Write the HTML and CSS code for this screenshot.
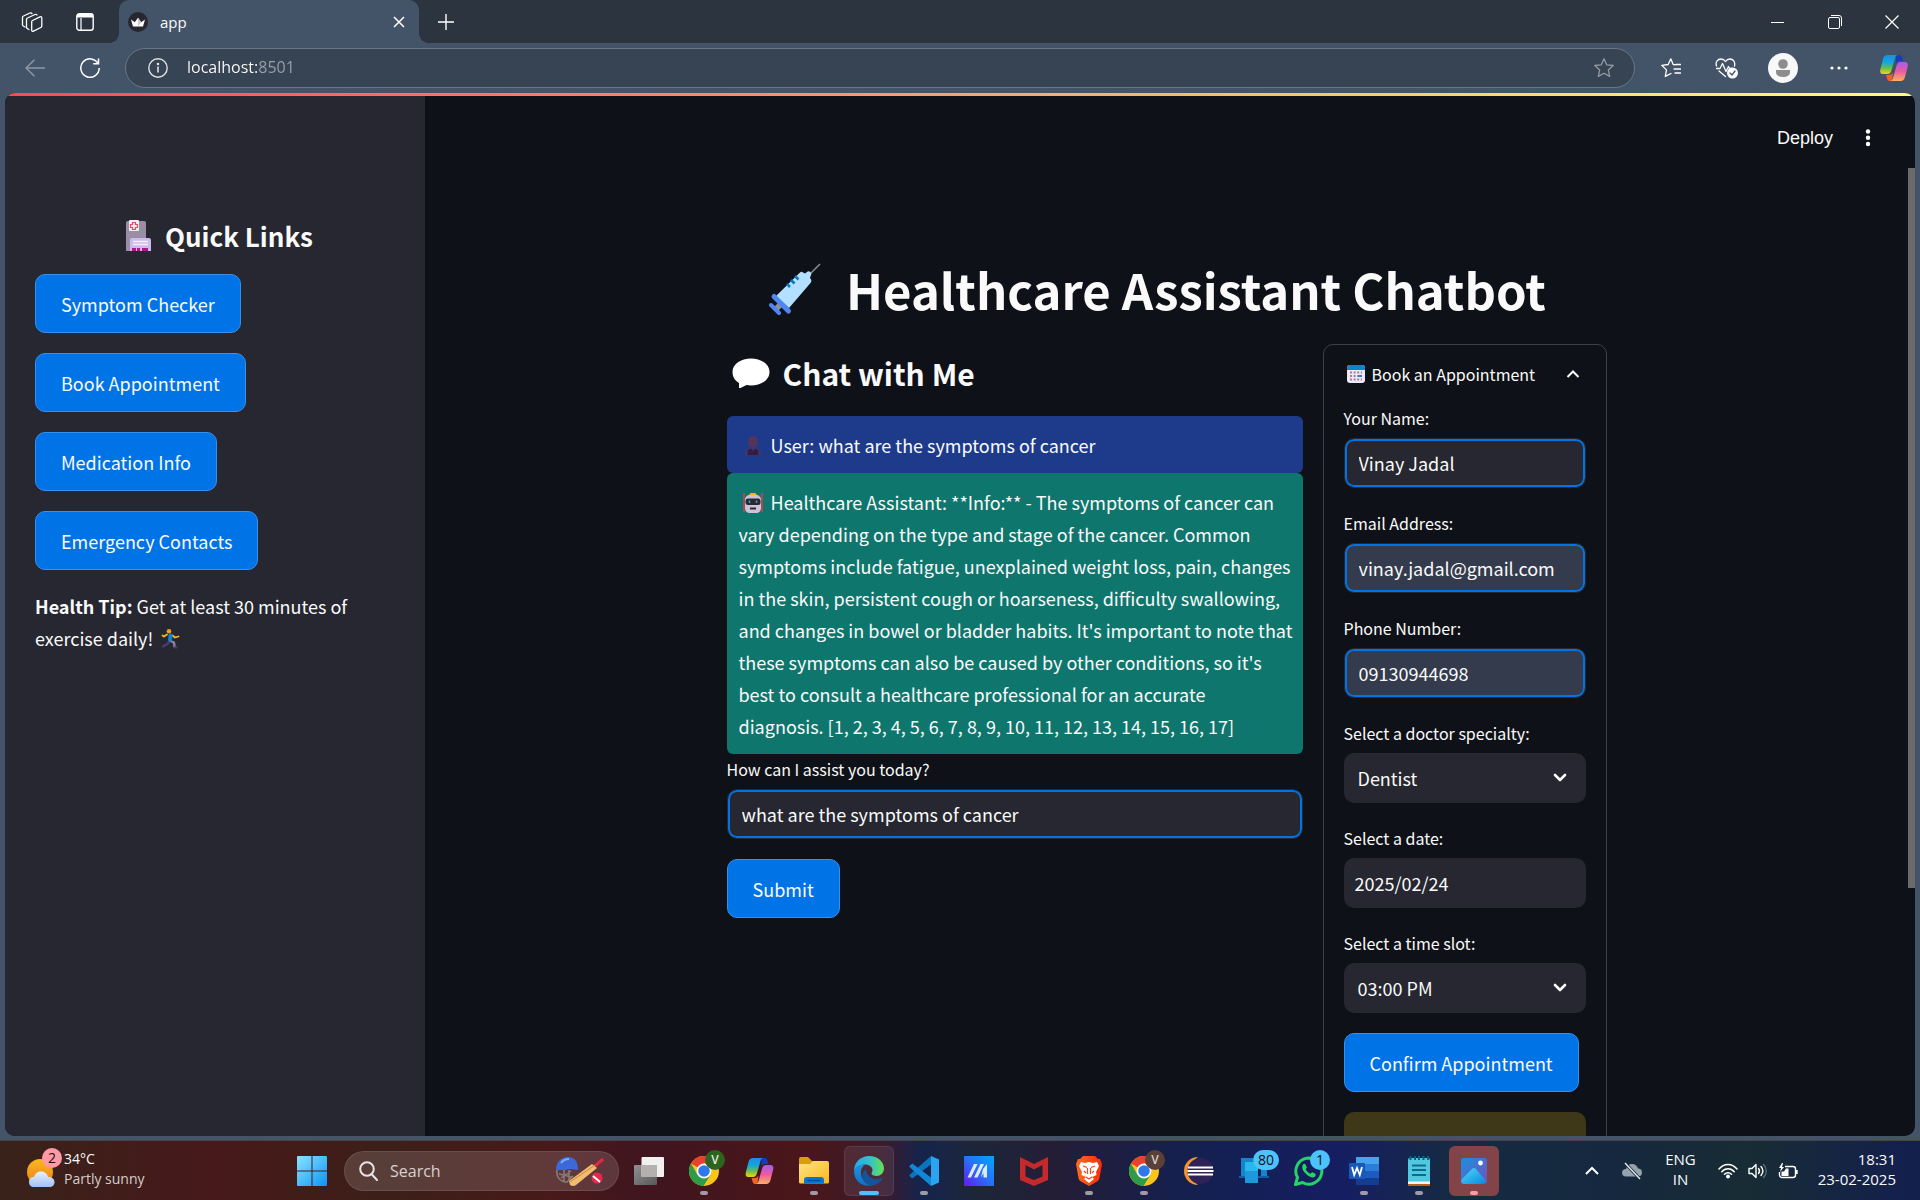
FILE: index.html
```html
<!DOCTYPE html>
<html lang="en">
<head>
<meta charset="utf-8">
<meta name="viewport" content="width=device-width, initial-scale=1">
<title>app</title>
<link rel="stylesheet" href="styles.css">
</head>
<body>
<svg class="defs" aria-hidden="true">
  <defs>
    <linearGradient id="cpA" x1="0" y1="0" x2="0" y2="1"><stop offset="0" stop-color="#1a8cf0"/><stop offset=".4" stop-color="#12a8d8"/><stop offset=".7" stop-color="#6cc04a"/><stop offset="1" stop-color="#f5d60a"/></linearGradient>
    <linearGradient id="cpB" x1="0" y1="0" x2="0" y2="1"><stop offset="0" stop-color="#a45cf0"/><stop offset=".5" stop-color="#ee5a9c"/><stop offset="1" stop-color="#fcb060"/></linearGradient>
    <linearGradient id="winG" x1="0" y1="0" x2="1" y2="1"><stop offset="0" stop-color="#8be4ff"/><stop offset="1" stop-color="#0a94f8"/></linearGradient>
    <linearGradient id="sunG" x1="0" y1="0" x2="0" y2="1"><stop offset="0" stop-color="#f8b820"/><stop offset="1" stop-color="#f08018"/></linearGradient>
    <linearGradient id="cloudG" x1="0" y1="0" x2="0" y2="1"><stop offset="0" stop-color="#e8f0fc"/><stop offset="1" stop-color="#a0c0f4"/></linearGradient>
    <linearGradient id="foldG" x1="0" y1="0" x2="1" y2="1"><stop offset="0" stop-color="#ffe484"/><stop offset="1" stop-color="#f8b820"/></linearGradient>
    <linearGradient id="edgeA" x1="0" y1="0" x2="1" y2="0"><stop offset="0" stop-color="#28a8e8"/><stop offset=".5" stop-color="#30c0d0"/><stop offset="1" stop-color="#68e050"/></linearGradient>
    <linearGradient id="edgeB" x1="0" y1="0" x2="0" y2="1"><stop offset="0" stop-color="#1c94e0"/><stop offset="1" stop-color="#1070c8"/></linearGradient>
    <linearGradient id="maG" x1="0" y1="1" x2="1" y2="0"><stop offset="0" stop-color="#6418f0"/><stop offset=".5" stop-color="#2870f8"/><stop offset="1" stop-color="#00a8ff"/></linearGradient>
    <linearGradient id="phG" x1="0" y1="0" x2="1" y2="1"><stop offset="0" stop-color="#1890e0"/><stop offset="1" stop-color="#7850b8"/></linearGradient>
    <linearGradient id="mtG" x1="0" y1="0" x2="1" y2="1"><stop offset="0" stop-color="#50d8f8"/><stop offset="1" stop-color="#0888e0"/></linearGradient>
    <linearGradient id="braveG" x1="0" y1="0" x2="1" y2="0"><stop offset="0" stop-color="#ff6a20"/><stop offset="1" stop-color="#fb2c08"/></linearGradient>
    <linearGradient id="grayG" x1="0" y1="0" x2="1" y2="1"><stop offset="0" stop-color="#909090"/><stop offset="1" stop-color="#585858"/></linearGradient>
    <symbol id="copilot" viewBox="0 0 28 28">
      <path d="M16 1h3c2 0 2.600 1 3.200 3l.8 3h-3c-2 0-3.500 1-4 3z" fill="#1838c8"/>
      <path d="M12 27H9.500c-1.500 0-2-1-2.500-2.500L6 21h3c2 0 3.500-1 4-3z" fill="#f06028"/>
      <path d="M7.500 1H18c-1.500 0-2.500 1-3 3l-3.600 12.500C10.600 19 9.500 20 7.500 20H3C.5 20-.3 18 .3 15.500L3 5C3.800 2.200 5 1 7.500 1z" fill="url(#cpA)"/>
      <path d="M20.500 27H10c1.500 0 2.500-1 3-3l3.600-12.500c.8-2.500 1.900-3.500 3.900-3.500H25c2.500 0 3.300 2 2.700 4.500L25 23c-.8 2.800-2 4-4.500 4z" fill="url(#cpB)"/>
    </symbol>
    <symbol id="chrome" viewBox="0 0 30 30">
      <circle cx="15" cy="15" r="15" fill="#fbc418"/>
      <path d="M15 15L2 7.500A15 15 0 0 1 28 7.500H15z" fill="#ea4030"/>
      <path d="M2 7.500A15 15 0 0 0 14.500 30L21.500 18.700 15 15 8.500 18.700z" fill="#2c9c48"/>
      <circle cx="15" cy="15" r="7.400" fill="#fff"/><circle cx="15" cy="15" r="5.800" fill="#2f78ec"/>
    </symbol>
  </defs>
</svg>

<div class="window">
  <header class="tabstrip">
    <button class="icon-btn" aria-label="Workspaces"><svg width="22" height="22" viewBox="0 0 22 22" fill="none" stroke="#fff" stroke-width="1.300" stroke-linejoin="round" stroke-linecap="round"><path d="M4 16l-1.500-.8A1.600 1.600 0 0 1 1.500 14V6.500c0-.8.3-1.200 1-1.500L9 2c.8-.3 1.500-.2 2 .5"/><path d="M8 18.500l-1.500-.8a1.600 1.600 0 0 1-1-1.500V8.500c0-.8.3-1.200 1-1.500L14 3.500c.8-.3 1.600-.2 2 .5"/><path d="M11.500 9.500l7.500-3.700c1-.4 1.800 0 1.800 1V15c0 .7-.3 1.200-1 1.500L12.500 20.200c-1 .5-1.800 0-1.800-1V11c0-.7.200-1.200.8-1.500z"/></svg></button>
    <button class="icon-btn" aria-label="Tab actions"><svg width="18" height="18" viewBox="0 0 18 18"><rect x=".8" y=".8" width="16.400" height="16.400" rx="2.500" fill="none" stroke="#fff" stroke-width="1.400"/><path d="M1 4.500V3a2 2 0 0 1 2-2h12a2 2 0 0 1 2 2v1.500z" fill="#fff"/><path d="M5 5v12" stroke="#fff" stroke-width="1.200"/></svg></button>
    <div class="tab">
      <svg width="20" height="20" viewBox="0 0 20 20"><circle cx="10" cy="10" r="10" fill="#262730"/><path d="M3 7.500l3.800 2.800L10 5.800l3.200 4.500L17 7.500l-2 7H5z" fill="#fff"/><path d="M10 5.800l3.200 4.500L10 14.500z" fill="#ccc"/></svg>
      <span class="tab-title">app</span>
      <button class="tab-close" aria-label="Close tab"><svg width="12" height="12" viewBox="0 0 12 12" stroke="#fff" stroke-width="1.500"><path d="M1 1l10 10M11 1L1 11"/></svg></button>
    </div>
    <button class="icon-btn new-tab" aria-label="New tab"><svg width="18" height="18" viewBox="0 0 18 18" stroke="#fff" stroke-width="1.400"><path d="M9 1v16M1 9h16"/></svg></button>
    <div class="win-controls">
      <button aria-label="Minimize"><svg width="14" height="14" viewBox="0 0 14 14" stroke="#fff"><path d="M0 7.500h13"/></svg></button>
      <button aria-label="Restore"><svg width="14" height="14" viewBox="0 0 14 14" fill="none" stroke="#fff"><rect x=".5" y="2.500" width="11" height="11" rx="1.500"/><path d="M3 .5h8a2.500 2.500 0 0 1 2.500 2.500v8"/></svg></button>
      <button aria-label="Close"><svg width="14" height="14" viewBox="0 0 14 14" stroke="#fff" stroke-width="1.200"><path d="M.5.5l13 13M13.500.5l-13 13"/></svg></button>
    </div>
  </header>

  <nav class="toolbar">
    <button class="icon-btn" aria-label="Back"><svg width="20" height="18" viewBox="0 0 20 18" fill="none" stroke="#8d98a5" stroke-width="1.400"><path d="M20 9H1M9.500.8L1 9l8.500 8.200"/></svg></button>
    <button class="icon-btn" aria-label="Refresh"><svg width="20" height="20" viewBox="0 0 20 20" fill="none" stroke="#fff" stroke-width="1.500"><path d="M18 5.500A9.200 9.200 0 1 0 19.200 10M18.500.5v5.300h-5.300"/></svg></button>
    <div class="address">
      <svg width="20" height="20" viewBox="0 0 20 20" fill="none" stroke="#dde1e5" stroke-width="1.400"><circle cx="10" cy="10" r="9.200"/><path d="M10 8.500v6" stroke-width="1.600"/><circle cx="10" cy="6" r=".6"/></svg>
      <input class="url" aria-label="Address" value="localhost:8501">
      <button class="star" aria-label="Add to favorites"><svg width="20" height="20" viewBox="0 0 20 20" fill="none" stroke="#939aa2" stroke-width="1.300" stroke-linejoin="round"><path d="M10 .8l2.700 6 6.500.7-4.900 4.400 1.400 6.500L10 15.200l-5.700 3.200 1.400-6.500L.8 7.500l6.500-.7z"/></svg></button>
    </div>
    <div class="toolbar-actions">
      <button aria-label="Favorites"><svg width="20" height="20" viewBox="0 0 20 20" fill="none" stroke="#fff" stroke-width="1.300" stroke-linejoin="round" stroke-linecap="round"><path d="M15 6.500h4.500M13 11h6.500M14 15h5.500M14.500 6.800l-2.300-.3L9.800.8 7.200 6.500.8 7.400l4.700 4.500-1.200 6.500L10 15.500"/></svg></button>
      <button aria-label="Browser essentials"><svg width="24" height="21" viewBox="0 0 24 21" fill="none" stroke="#fff" stroke-width="1.300" stroke-linecap="round" stroke-linejoin="round"><path d="M1.500 8C0 3.500 3 1 6 1c2 0 3.500 1 4.500 2.500C11.500 2 13 1 15 1c3 0 5.500 2.500 4.500 7M1.500 10.500H5l2.500-5 3.500 8 2.500-5 1 2h3M4 13l6.500 5.500"/><circle cx="17.500" cy="15" r="5.500" fill="#fff" stroke="none"/><path d="M15 15l2 2 3-4" stroke="#445468"/></svg></button>
      <button aria-label="Profile"><svg width="30" height="30" viewBox="0 0 30 30"><circle cx="15" cy="15" r="15" fill="#f8f8f8"/><circle cx="15" cy="11" r="4.800" fill="#8d8d8d"/><path d="M8 17h14v2c0 3.500-3 5-7 5s-7-1.500-7-5z" fill="#8d8d8d"/></svg></button>
      <button aria-label="Settings and more"><svg width="18" height="4" viewBox="0 0 18 4" fill="#fff"><circle cx="2" cy="2" r="1.600"/><circle cx="9" cy="2" r="1.600"/><circle cx="16" cy="2" r="1.600"/></svg></button>
      <button aria-label="Copilot"><svg width="28" height="28"><use href="#copilot"/></svg></button>
    </div>
  </nav>

  <div class="viewport">
    <div class="rainbow"></div>
    <aside class="sidebar">
      <h2 class="side-title"><svg width="27" height="32" viewBox="0 0 27 32"><path d="M1 3a2 2 0 0 1 2-2h16a2 2 0 0 1 2 2v28H1z" fill="#998ea4"/><rect x="4" y="0" width="10" height="11" rx="1" fill="#f4eef8"/><path d="M7.500 2.500h3v2h2v3h-2v2h-3v-2h-2v-3h2z" fill="none" stroke="#f04858" stroke-width="1.200"/><path d="M5 20a2 2 0 0 1 2-2h17a2 2 0 0 1 2 2v11H5z" fill="#cdbcea"/><path d="M8 21.500h15M8 24.500h15" stroke="#f4eef8" stroke-width="1.500"/><path d="M7 28h4v3H7zM12 28h3v3h-3zM17 28h6v3h-6z" fill="#b01888"/></svg><span>Quick Links</span></h2>
      <button class="btn">Symptom Checker</button>
      <button class="btn">Book Appointment</button>
      <button class="btn">Medication Info</button>
      <button class="btn">Emergency Contacts</button>
      <p class="tip"><strong>Health Tip:</strong> Get at least 30 minutes of exercise daily! <svg class="emoji" width="20" height="20" viewBox="0 0 20 20" fill="none" stroke-linecap="round" stroke-linejoin="round"><path d="M8 12l-1 2.500-5 3" stroke="#503878" stroke-width="2.400"/><path d="M9.500 12l3.500 1.500.5 4" stroke="#8d8098" stroke-width="2.400"/><path d="M6 5.500L3 7.500l-1.500-1M11.500 6.500l2.500 2 3.500-1" stroke="#fcb820" stroke-width="1.800"/><path d="M9.500 6.500L9 10.500" stroke="#0088d0" stroke-width="4"/><circle cx="8" cy="2.300" r="2.300" fill="#f0a020"/><path d="M13.500 18.500h2" stroke="#503878" stroke-width="2"/></svg></p>
    </aside>

    <main class="main">
      <div class="app-header">
        <button class="deploy">Deploy</button>
        <button class="kebab" aria-label="Main menu"><svg width="6" height="18" viewBox="0 0 6 18" fill="#fff"><circle cx="3" cy="2.500" r="2.200"/><circle cx="3" cy="8.800" r="2.200"/><circle cx="3" cy="15" r="2.200"/></svg></button>
      </div>
      <div class="content">
        <h1 class="title"><svg width="52" height="52" viewBox="0 0 52 52"><path d="M40 12L51 1" stroke="#8a8a8e" stroke-width="1.600"/><path d="M4 45l6-6 4 4-6 6z" fill="#909098"/><path d="M2 42l8 8" stroke="#4f86f4" stroke-width="4" stroke-linecap="round"/><path d="M31 9.500c1-1 2-1 3 0l2 1 2-1.500c1-1 2.500-.8 3.500.3s1 2.500.2 3.500L41 15c1.500 1.500 2 3 .5 5L20 45 7 33z" fill="#b3e0ff"/><path d="M5 33.500L19.500 48" stroke="#4f86f4" stroke-width="5" stroke-linecap="round"/><path d="M18 21l3 3M22 17l3.500 3.500M26 13l3.500 3.500" stroke="#0a78c0" stroke-width="2.600"/></svg><span>Healthcare Assistant Chatbot</span></h1>
        <div class="columns">
          <section class="chat">
            <h2 class="chat-title"><svg width="38" height="31" viewBox="0 0 38 31"><path d="M19 .5C29 .5 37.500 6 37.500 14S29 27.500 19 27.500c-1.500 0-3 0-4.500-.4L8.500 30c-1 .3-1.800 0-1.500-1V25C3 22.500.5 19 .5 14 .5 6 9 .5 19 .5z" fill="#fff"/></svg><span>Chat with Me</span></h2>
            <div class="msg user"><svg class="emoji" width="20" height="20" viewBox="-1 0 20 20"><path d="M9 0c3.300 0 5 2 5 5 0 2.500-.5 5-2.500 6.500h-5C4.500 10 4 7.500 4 5c0-3 1.700-5 5-5z" fill="#52345f"/><path d="M1 19c0-4 2-6 5-6.500h6c3 .5 5 2.500 5 6.500z" fill="#52345f"/><path d="M3.500 19v-4.500L7 12.500l2 2.500 2-2.500 3.500 2V19z" fill="#351c40"/></svg> User: what are the symptoms of cancer</div>
            <div class="msg bot"><svg class="emoji" width="20" height="20" viewBox="0 0 20 20"><path d="M1 0v19M19 0v19" stroke="#e83848" stroke-width="1.400"/><rect x="6.500" y="0" width="7" height="4" rx="1.500" fill="#fcb020"/><path d="M2 7c0-3 2-5 5-5h6c3 0 5 2 5 5v8c0 3-2 5-5 5H7c-3 0-5-2-5-5z" fill="#cdc2d6"/><rect x="2.500" y="5.500" width="15" height="6.500" rx="2.500" fill="#2c2830"/><path d="M6.500 7.500v2.500M13.500 7.500v2.500" stroke="#10a8f0" stroke-width="1.600"/><path d="M7 15.500h6" stroke="#2c2830" stroke-width="2"/></svg> Healthcare Assistant: **Info:** - The symptoms of cancer can vary depending on the type and stage of the cancer. Common symptoms include fatigue, unexplained weight loss, pain, changes in the skin, persistent cough or hoarseness, difficulty swallowing, and changes in bowel or bladder habits. It's important to note that these symptoms can also be caused by other conditions, so it's best to consult a healthcare professional for an accurate diagnosis. [1, 2, 3, 4, 5, 6, 7, 8, 9, 10, 11, 12, 13, 14, 15, 16, 17]</div>
            <div class="field">
              <label for="q">How can I assist you today?</label>
              <input class="text" id="q" type="text" value="what are the symptoms of cancer">
            </div>
            <button class="btn">Submit</button>
          </section>

          <details class="expander" open>
            <summary><svg width="18" height="18" viewBox="0 0 18 18"><rect width="18" height="18" rx="3" fill="#f0e8f8"/><path d="M0 5V3a3 3 0 0 1 3-3h12a3 3 0 0 1 3 3v2z" fill="#0a84cc"/><path d="M3 7.500h12M3 11h12M3 14.500h12" stroke="#90889c" stroke-width="1.800" stroke-dasharray="2 1.600"/><path d="M11.500 11h3" stroke="#0a84cc" stroke-width="2"/></svg><span>Book an Appointment</span><svg class="chev" width="14" height="10" viewBox="0 0 14 10" fill="none" stroke="#fafafa" stroke-width="2"><path d="M1.500 8L7 2.500 12.500 8"/></svg></summary>
            <form class="form">
              <div class="field"><label for="n">Your Name:</label><input class="text" id="n" type="text" value="Vinay Jadal"></div>
              <div class="field"><label for="e">Email Address:</label><input class="text autofill" id="e" type="text" value="vinay.jadal@gmail.com"></div>
              <div class="field"><label for="p">Phone Number:</label><input class="text autofill" id="p" type="text" value="09130944698"></div>
              <div class="field"><label for="s">Select a doctor specialty:</label>
                <div class="select"><select id="s"><option>Dentist</option></select><svg width="14" height="10" viewBox="0 0 14 10" fill="none" stroke="#fafafa" stroke-width="2.600" stroke-linecap="round" stroke-linejoin="round"><path d="M2 2l5 5 5-5"/></svg></div></div>
              <div class="field"><label for="d">Select a date:</label><input class="date" id="d" type="text" value="2025/02/24"></div>
              <div class="field"><label for="t">Select a time slot:</label>
                <div class="select"><select id="t"><option>03:00 PM</option></select><svg width="14" height="10" viewBox="0 0 14 10" fill="none" stroke="#fafafa" stroke-width="2.600" stroke-linecap="round" stroke-linejoin="round"><path d="M2 2l5 5 5-5"/></svg></div></div>
              <button class="btn" type="button">Confirm Appointment</button>
              <div class="alert"></div>
            </form>
          </details>
        </div>
      </div>
    </main>
    <div class="scrollbar"><div class="thumb"></div></div>
  </div>
</div>

<footer class="taskbar">
  <div class="weather">
    <div class="weather-icon"><svg width="30" height="30" viewBox="0 0 30 30"><circle cx="13" cy="14" r="13" fill="url(#sunG)"/><path d="M7 29c-3 0-5-2-5-5s2-5 5-5c1-3.500 4-5.500 7-5.500 4 0 6.500 2.500 7 5.500 4 0 6.500 2 6.500 5s-2 5-5 5z" fill="url(#cloudG)"/></svg><span class="badge pink">2</span></div>
    <div class="weather-text"><span>34°C</span><span class="dim">Partly sunny</span></div>
  </div>
  <div class="apps">
    <button class="app" aria-label="Start"><svg width="30" height="30" viewBox="0 0 30 30" fill="url(#winG)"><path d="M1 0h13.500v14.500H0V1a1 1 0 0 1 1-1zM15.500 0H29a1 1 0 0 1 1 1v13.500H15.500zM0 15.500h14.500V30H1a1 1 0 0 1-1-1zM15.500 15.500H30V29a1 1 0 0 1-1 1H15.500z"/></svg></button>
    <label class="search"><svg width="19" height="20" viewBox="0 0 19 20" fill="none" stroke="#e8e4e4" stroke-width="2"><circle cx="8" cy="8" r="6.800"/><path d="M12.500 13l5.500 6" stroke-linecap="round"/></svg><input type="text" placeholder="Search" aria-label="Search">
      <svg width="50" height="30" viewBox="0 0 50 30"><path d="M2 14c-1 7 3 12 10 12l6-6M4 18l13 3M6 22l10-7M9 14v12M14 14v11" fill="none" stroke="#8a7c7c" stroke-width="1.500"/><path d="M1 14C1 6 6 1 13 1s10 5 10 13l-8-1-5 1z" fill="#3c68d8"/><path d="M6 7c2-3 5-4 8-4" stroke="#84acf8" stroke-width="2" fill="none"/><path d="M40 10l8-7" stroke="#e02840" stroke-width="3"/><path d="M14 25L37 8l5 4-21 17c-2 1.500-4 1-6 0z" fill="#f2bc70"/><path d="M15 26L40 9" stroke="#d08838" stroke-width="1"/><circle cx="42" cy="22" r="5.500" fill="#e82848"/><path d="M38 20l7 6" stroke="#fff" stroke-width="2"/></svg></label>
    <button class="app" aria-label="Task view"><svg width="30" height="28" viewBox="0 0 30 28"><rect y="8" width="23" height="20" rx="1" fill="url(#grayG)"/><rect x="7.500" width="22.500" height="20" rx="1" fill="#f0f0f0"/><path d="M7.500 8H23v12H7.500z" fill="#b4b0b0"/></svg></button>
    <button class="app run" aria-label="Chrome"><svg width="30" height="30"><use href="#chrome"/></svg><span class="badge green">V</span></button>
    <button class="app" aria-label="Copilot"><svg width="29" height="28"><use href="#copilot"/></svg></button>
    <button class="app run" aria-label="File Explorer"><svg width="30" height="28" viewBox="0 0 30 28"><path d="M0 2a2 2 0 0 1 2-2h7l4 4h15v6H0z" fill="#dc9c10"/><path d="M0 7h11l3-3h14a2 2 0 0 1 2 2v19a1.500 1.500 0 0 1-1.500 1.500h-27A1.500 1.500 0 0 1 0 25z" fill="url(#foldG)"/><path d="M5 26.500V23a3 3 0 0 1 3-3h14a3 3 0 0 1 3 3v3.500z" fill="#0c74cc"/><path d="M9 23.500h12" stroke="#084c94" stroke-width="1.300" stroke-linecap="round"/></svg></button>
    <button class="app active" aria-label="Edge"><svg width="30" height="30" viewBox="0 0 30 30"><path d="M15 0c9 0 15 6 15 12.500 0 4.500-3.500 7.500-7.500 7.500-3 0-5-1-5-2.500 0-.8 1-1.300 1-3.500 0-3-3-5.500-7.500-5.500C6 8.500 2 11 0 15 0 6.500 6.500 0 15 0z" fill="url(#edgeA)"/><path d="M11 8.500c-3 2-4.500 5.500-4 9.500.8 6 5.500 11.500 12 11.500C8 31.500 0 25 0 15c1.500-4 6-7 11-6.500z" fill="url(#edgeB)"/><path d="M12 13c-3 2.500-4.500 6-3 10s5.500 6.500 10 6.500c4-1 7-3 9.500-6.500.4-.8-.3-1-1-.7-7 3-15-1-15.500-9.300z" fill="#14549c"/></svg></button>
    <button class="app run" aria-label="Visual Studio Code"><svg width="30" height="30" viewBox="0 0 30 30"><path d="M22 0l8 3.500v23L22 30z" fill="#2aa4f0"/><path d="M22 0L1 18.500c-.8.700-.8 1.300 0 2l1.500 1.300c.6.500 1.200.5 1.800 0L22 8.500z" fill="#0a74c0"/><path d="M22 30L1 11.500c-.8-.7-.8-1.300 0-2l1.500-1.300c.6-.5 1.200-.5 1.800 0L22 21.500z" fill="#1088d8"/></svg></button>
    <button class="app" aria-label="MyASUS"><svg width="30" height="30" viewBox="0 0 30 30"><path d="M0 0h30v30H0z" fill="url(#maG)"/><path d="M3.500 21.500L10 8h3.500L7 21.500zM10 21.500L16.500 8H20l-6.500 13.500zM19 13l4-5v13.500h-3.500V17L17 21.500z" fill="#fff" opacity=".85"/></svg></button>
    <button class="app" aria-label="McAfee"><svg width="28" height="30" viewBox="0 0 28 30"><path d="M0 1l14 7L28 1v23l-14 6-14-6zM5.500 9v11.500L14 24l8.500-3.500V9L14 13.500z" fill="#c4292c" fill-rule="evenodd"/></svg></button>
    <button class="app run" aria-label="Brave"><svg width="26" height="30" viewBox="0 0 26 30"><path d="M7 0h12l3 3h2l2 5-2.500 14c-.5 2-1 2.500-2.500 3.500L13 30l-8-4.500C3.500 24.500 3 24 2.500 22L0 8l2-5h2z" fill="url(#braveG)"/><path d="M5 6l4 1 4-1 4 1 4-1 2 4-3 6 .5 3L16 21l2 2-5 4-5-4 2-2-4.500-2 .5-3-3-6z" fill="#fff"/><path d="M7 10l4 1.500M19 10l-4 1.500M11.500 12v6M14.500 12v6M8 15l2 2M18 15l-2 2M10 21l3 2 3-2" stroke="#f44818" stroke-width="1.200" fill="none"/></svg></button>
    <button class="app run" aria-label="Chrome, second profile"><svg width="30" height="30"><use href="#chrome"/></svg><span class="badge brown">V</span></button>
    <button class="app" aria-label="Eclipse"><svg width="30" height="28" viewBox="0 0 30 28"><path d="M14 0A14 14 0 0 0 14 28 17 17 0 0 1 14 0z" fill="#f4942c"/><circle cx="16.500" cy="14" r="13" fill="#302258"/><path d="M4 10.500h25M3.500 14h26M4 17.500h25" stroke="#fff" stroke-width="2"/></svg></button>
    <button class="app" aria-label="Phone Link"><svg width="30" height="28" viewBox="0 0 30 28"><path d="M2 1h12v18H2zM22 8h6v11h-6z" fill="#1484cc"/><path d="M0 19h30v2H0z" fill="#0c60a8"/><path d="M6 5h13v17H6z" fill="#28b8ec"/><path d="M6 14h13v12H6z" fill="#1c98dc"/></svg><span class="badge sky wide">80</span></button>
    <button class="app" aria-label="WhatsApp"><svg width="30" height="30" viewBox="0 0 30 30"><path d="M1.500 28.500l2-7A13 13 0 1 1 8.500 26.500z" fill="none" stroke="#25d366" stroke-width="3" stroke-linejoin="round"/><path d="M9 8.500c.5-1 2-1 2.500 0l1.300 2.700c.2.600-.8 1.600-1 2 1 2 2.500 3.500 4.700 4.500.6-.4 1.400-1.600 2-1.400l2.800 1.400c.8.500.3 2.500-.8 3.300-3.500 2.200-12-4.500-12.300-9.500 0-1.200.4-2.300.8-3z" fill="#25d366"/></svg><span class="badge sky">1</span></button>
    <button class="app run" aria-label="Word"><svg width="30" height="28" viewBox="0 0 30 28"><path d="M7 0h23v7H7z" fill="#44a4ec"/><path d="M7 7h23v7H7z" fill="#2c7cd8"/><path d="M7 14h23v7H7z" fill="#1c5cc0"/><path d="M7 21h23v7H7z" fill="#143c90"/><rect y="6" width="16" height="16" rx="1" fill="#1858b8"/><path d="M3 10l2.200 8L8 11l2.800 7L13 10" fill="none" stroke="#fff" stroke-width="1.800"/></svg></button>
    <button class="app run" aria-label="Notepad"><svg width="22" height="30" viewBox="0 0 22 30"><rect y="2" width="22" height="26" rx="1.500" fill="#50c8e0"/><path d="M0 25.500h22V28H0z" fill="#f8f4ec"/><path d="M0 28h22v2H0z" fill="#b86018"/><path d="M4 9.500h14M4 14h14M4 19h14" stroke="#0c6c90" stroke-width="1.800"/><path d="M2.500 0v4M7 0v4M11 0v4M15.500 0v4M20 0v4" stroke="#0c6080" stroke-width="2"/></svg></button>
    <button class="app run photos" aria-label="Photos"><svg width="26" height="26" viewBox="0 0 26 26"><rect width="26" height="26" rx="3" fill="url(#phG)"/><path d="M1 21L11 11c1.300-1.300 2.700-1.300 4 0l10 12c-.5 2-1.500 3-3 3H3c-1.500 0-2.500-1-3-3z" fill="url(#mtG)"/><circle cx="19.500" cy="5" r="2.400" fill="#fff"/></svg></button>
  </div>
  <div class="tray">
    <button aria-label="Show hidden icons"><svg width="14" height="9" viewBox="0 0 14 9" fill="none" stroke="#fff" stroke-width="2"><path d="M1 8l6-6 6 6"/></svg></button>
    <button class="cloud" aria-label="OneDrive"><svg width="20" height="18" viewBox="0 0 20 18"><path d="M4 14.500c-2.500 0-4-1.500-4-3.800S1.700 7 4 7c1-3.500 3-5 6-5s5 1.500 6 4.500c2.500 0 4 1.500 4 4s-1.500 4-4 4z" fill="#96a2ac"/><path d="M3 1l15 16" stroke="#16293c" stroke-width="3"/><path d="M3 1l15 16" stroke="#e4e8ec" stroke-width="1.400"/></svg></button>
    <button class="lang"><span>ENG</span><span>IN</span></button>
    <button class="status" aria-label="Network, volume, battery">
      <svg width="20" height="16" viewBox="0 0 20 16" fill="none" stroke="#fff" stroke-width="1.500" stroke-linecap="round"><path d="M1 6c5-6 13-6 18 0M3.800 8.800c3.500-4 9-4 12.400 0M6.500 11.300c2-2.200 5-2.200 7 0"/><circle cx="10" cy="13.500" r="1.200" fill="#fff"/></svg>
      <svg width="20" height="16" viewBox="0 0 20 16" fill="none" stroke="#fff" stroke-width="1.400" stroke-linejoin="round" stroke-linecap="round"><path d="M1 5.500h3L8 1.500v13l-4-4H1zM10.500 5.500c1.200 1.500 1.200 3.500 0 5M13 3.500c2.300 2.700 2.300 6.300 0 9"/><path d="M15.500 1.500c3.700 4 3.700 9 0 13" stroke="#5c6c78"/></svg>
      <svg width="20" height="16" viewBox="0 0 20 16" fill="none" stroke="#fff" stroke-width="1.400"><path d="M7 3.500h8a2.500 2.500 0 0 1 2.500 2.500v6a2.500 2.500 0 0 1-2.500 2.500H4A2.500 2.500 0 0 1 1.500 12V9"/><path d="M18.800 7v4" stroke-width="1.800"/><path d="M3.500 13V8.500H6l2-3h2.500V13z" fill="#fff" stroke="none"/><path d="M4 0L1 5h2L2 9l4-5H4l1-4z" fill="#fff" stroke="none"/></svg>
    </button>
    <div class="clock"><span>18:31</span><span>23-02-2025</span></div>
  </div>
</footer>
</body>
</html>
```
FILE: styles.css
```css
:root {
  --sans: "Noto Sans CJK SC", "Noto Sans", sans-serif;
  --ui: "Open Sans", "Noto Sans", sans-serif;
  --text: #fafafa;
  --panel: #262730;
  --page: #0e1117;
  --blue: #0073e6;
}

* { box-sizing: border-box; }

html, body { height: 100%; }

body {
  margin: 0;
  display: flex;
  flex-direction: column;
  overflow: hidden;
  background: #445468;
  color: var(--text);
  font-family: var(--ui);
}

button, input, select { font: inherit; color: inherit; margin: 0; }
button { background: none; border: 0; padding: 0; }
svg { flex: none; display: block; }
h1, h2, p { margin: 0; }
.defs { position: absolute; width: 0; height: 0; }

/* browser window */
.window {
  flex: 1;
  min-height: 0;
  display: flex;
  flex-direction: column;
}

.icon-btn { display: grid; place-items: center; width: 50px; height: 40px; }

.tabstrip {
  display: flex;
  align-items: center;
  height: 43px;
  padding-left: 7px;
  background: #2b343f;
}
.tabstrip .icon-btn + .icon-btn { margin-left: 3px; }

.tab {
  position: relative;
  display: flex;
  align-items: center;
  align-self: stretch;
  gap: 12px;
  width: 300px;
  margin-left: 9px;
  padding: 0 14px 0 9px;
  background: #445468;
  border-radius: 10px 10px 0 0;
  font-size: 15px;
}
.tab::before, .tab::after {
  content: "";
  position: absolute;
  bottom: 0;
  width: 10px;
  height: 10px;
}
.tab::before { left: -10px; background: radial-gradient(circle at 0 0, #2b343f 10px, #445468 10px); }
.tab::after { right: -10px; background: radial-gradient(circle at 100% 0, #2b343f 10px, #445468 10px); }
.tab-close { margin-left: auto; }
.new-tab { margin-left: 2px; }

.win-controls { display: flex; align-items: center; margin-left: auto; height: 43px; }
.win-controls button { display: grid; place-items: center; width: 57px; height: 43px; }

.toolbar {
  display: flex;
  align-items: center;
  height: 50px;
  padding-left: 10px;
  background: #445468;
}
.toolbar .icon-btn + .icon-btn { margin-left: 5px; }

.address {
  flex: 1;
  display: flex;
  align-items: center;
  gap: 19px;
  height: 40px;
  margin-left: 10px;
  padding: 0 20px 0 22px;
  background: #374453;
  border: 1px solid #6a7685;
  border-radius: 20px;
}
.url {
  flex: 1;
  min-width: 0;
  padding: 0 0 2px;
  border: 0;
  outline: 0;
  font-size: 16px;
  color: transparent;
  background: linear-gradient(90deg, #fff 71px, #9aa2ab 71px) text;
}

.toolbar-actions { display: flex; align-items: center; padding-left: 8px; }
.toolbar-actions button { display: grid; place-items: center; width: 56px; height: 40px; }
.toolbar-actions button:last-child { width: 53px; }

/* page viewport */
.viewport {
  position: relative;
  flex: 1;
  min-height: 0;
  display: flex;
  margin: 0 5px 4px;
  overflow: hidden;
  background: var(--page);
  border-radius: 10px;
  font-family: var(--sans);
}
.rainbow {
  position: absolute;
  inset: 0 0 auto;
  height: 3px;
  background: linear-gradient(90deg, #ff4b4b, #fffd80);
}

.sidebar {
  display: flex;
  flex-direction: column;
  align-items: flex-start;
  gap: 20px;
  width: 420px;
  padding: 125px 30px 0;
  background: var(--panel);
}
.side-title {
  display: flex;
  align-items: center;
  align-self: stretch;
  justify-content: center;
  gap: 13px;
  height: 36px;
  padding-left: 8px;
  font-size: 26px;
  font-weight: 600;
  line-height: 36px;
}

.btn {
  height: 59px;
  padding: 0 25px;
  background: var(--blue);
  border: 1px solid #3590ee;
  border-radius: 10px;
  font-size: 18px;
  line-height: 28px;
  white-space: nowrap;
}

.tip { font-size: 18px; line-height: 32px; padding-right: 20px; }
.emoji { display: inline-block; vertical-align: -3px; margin: 0 4px; }

.main { flex: 1; min-width: 0; display: flex; flex-direction: column; overflow: hidden; }
.app-header {
  flex: none;
  display: flex;
  align-items: center;
  justify-content: flex-end;
  gap: 32px;
  height: 75px;
  padding: 15px 37px 0 0;
}
.deploy { font-family: "Liberation Sans", Arial, sans-serif; font-size: 18px; }

.content { width: 100%; max-width: 880px; margin: 0 auto; padding-top: 88px; }
.title {
  display: flex;
  align-items: center;
  justify-content: center;
  gap: 25px;
  height: 66px;
  margin-bottom: 22px;
  padding-right: 18px;
  font-size: 49px;
  font-weight: 700;
  line-height: 66px;
  white-space: nowrap;
}
.columns {
  display: grid;
  grid-template-columns: minmax(0, 576fr) minmax(0, 284fr);
  gap: 20px;
}

.chat-title {
  display: flex;
  align-items: center;
  gap: 13px;
  height: 58px;
  margin-bottom: 14px;
  padding-left: 5px;
  font-size: 30px;
  font-weight: 600;
  line-height: 58px;
}
.msg {
  padding: 13px 8px 12px 12px;
  border-radius: 6px;
  font-size: 18px;
  line-height: 32px;
}
.user { background: #1e3a8a; }
.bot { background: #0f766e; }

.field { display: flex; flex-direction: column; gap: 5px; }
.field label { font-size: 16px; line-height: 30px; }
.chat .field { margin-bottom: 20px; }

.text, .date, .select {
  width: 100%;
  height: 50px;
  background: var(--panel);
  border-radius: 10px;
  font-size: 18px;
}
.text {
  padding: 0 14px;
  border: 1px solid var(--panel);
  outline: 0;
  box-shadow: inset 0 0 0 2px var(--blue);
}
.autofill { background: #343b4d; }
.date { padding: 0 11px; border: 0; }

.select { display: grid; align-items: center; }
.select > * { grid-area: 1 / 1; }
.select select {
  appearance: none;
  width: 100%;
  height: 100%;
  padding: 0 14px;
  background: none;
  border: 0;
}
.select svg { justify-self: end; margin-right: 19px; pointer-events: none; }

.expander {
  border: 1px solid #3d4046;
  border-radius: 10px;
}
.expander summary {
  display: flex;
  align-items: center;
  gap: 7px;
  height: 58px;
  padding: 0 26px 0 23px;
  font-size: 16px;
  list-style: none;
  white-space: nowrap;
}
.chev { margin-left: auto; }
.form {
  display: flex;
  flex-direction: column;
  align-items: flex-start;
  gap: 20px;
  padding: 0 20px 20px;
}
.form .field { width: 100%; }
.alert { width: 100%; height: 120px; background: #3e3819; border-radius: 10px; }

.scrollbar { width: 7px; padding-top: 75px; }
.thumb { height: 720px; background: #6b6b6b; }

/* taskbar */
.taskbar {
  display: flex;
  align-items: center;
  height: 60px;
  border-top: 1px solid #4a4248;
  background: linear-gradient(90deg, #38221a 0, #47191a 11%, #3c1f18 20%, #48191a 29%, #40151f 34%, #4a1619 42%, #3a1b2d 46%, #15244d 48%, #1d2638 51%, #241d36 55%, #14204f 62%, #161e62 70%, #152b40 76%, #15283f 84%, #172c34 91%, #14204c 99%);
  font-size: 15px;
}
.weather {
  flex: 0 0 287px;
  display: flex;
  align-items: center;
  gap: 6px;
  padding-left: 27px;
}
.weather-icon { position: relative; padding: 4px 1px 0 0; }
.weather-text { display: flex; flex-direction: column; padding-bottom: 4px; font-size: 14px; line-height: 20px; }
.dim { color: #d6cccb; }

.apps { display: flex; align-items: center; gap: 5px; }
.app {
  position: relative;
  display: grid;
  place-items: center;
  width: 50px;
  height: 50px;
  border-radius: 6px;
}
.app.run::after, .app.active::after {
  content: "";
  position: absolute;
  bottom: 1px;
  left: 21px;
  width: 8px;
  height: 4px;
  border-radius: 2px;
  background: #a09aa6;
}
.app.active { background: #ffffff14; box-shadow: inset 0 0 0 1px #ffffff14; }
.app.active::after { left: 15px; width: 20px; background: #4cc2ff; }
.app.photos { background: #824449; }
.app.photos::after { background: #ff99a4; }

.badge {
  position: absolute;
  top: 4px;
  right: 4px;
  display: grid;
  place-items: center;
  width: 20px;
  height: 20px;
  border-radius: 10px;
  font-size: 12px;
  line-height: 20px;
  color: #111;
}
.badge.pink { top: -6px; right: -4px; background: #ff99a4; font-size: 14px; }
.badge.green { background: #2c6420; color: #e0e8dc; font-weight: 600; }
.badge.brown { background: #5a4038; color: #d8ccc8; font-weight: 600; }
.badge.sky { background: #4cc2ff; font-size: 14px; }
.badge.wide { width: 26px; right: 0; }

.search {
  display: flex;
  align-items: center;
  gap: 12px;
  width: 275px;
  height: 40px;
  margin-left: 2px;
  padding: 0 13px 0 14px;
  background: #ffffff24;
  border: 1px solid #ffffff18;
  border-radius: 20px;
}
.search input {
  flex: 1;
  min-width: 0;
  padding: 0;
  border: 0;
  outline: 0;
  background: none;
  font-size: 16px;
}
.search input::placeholder { color: #d8d0cf; opacity: 1; }

.tray { display: flex; align-items: center; margin-left: auto; padding-right: 24px; text-align: right; }
.cloud { margin-left: 23px; }
.lang, .clock { display: flex; flex-direction: column; padding-bottom: 4px; line-height: 20px; }
.lang { align-items: center; margin-left: 23px; text-align: center; }
.status { display: flex; gap: 10px; margin-left: 22px; }
.clock { margin-left: 20px; }
```
